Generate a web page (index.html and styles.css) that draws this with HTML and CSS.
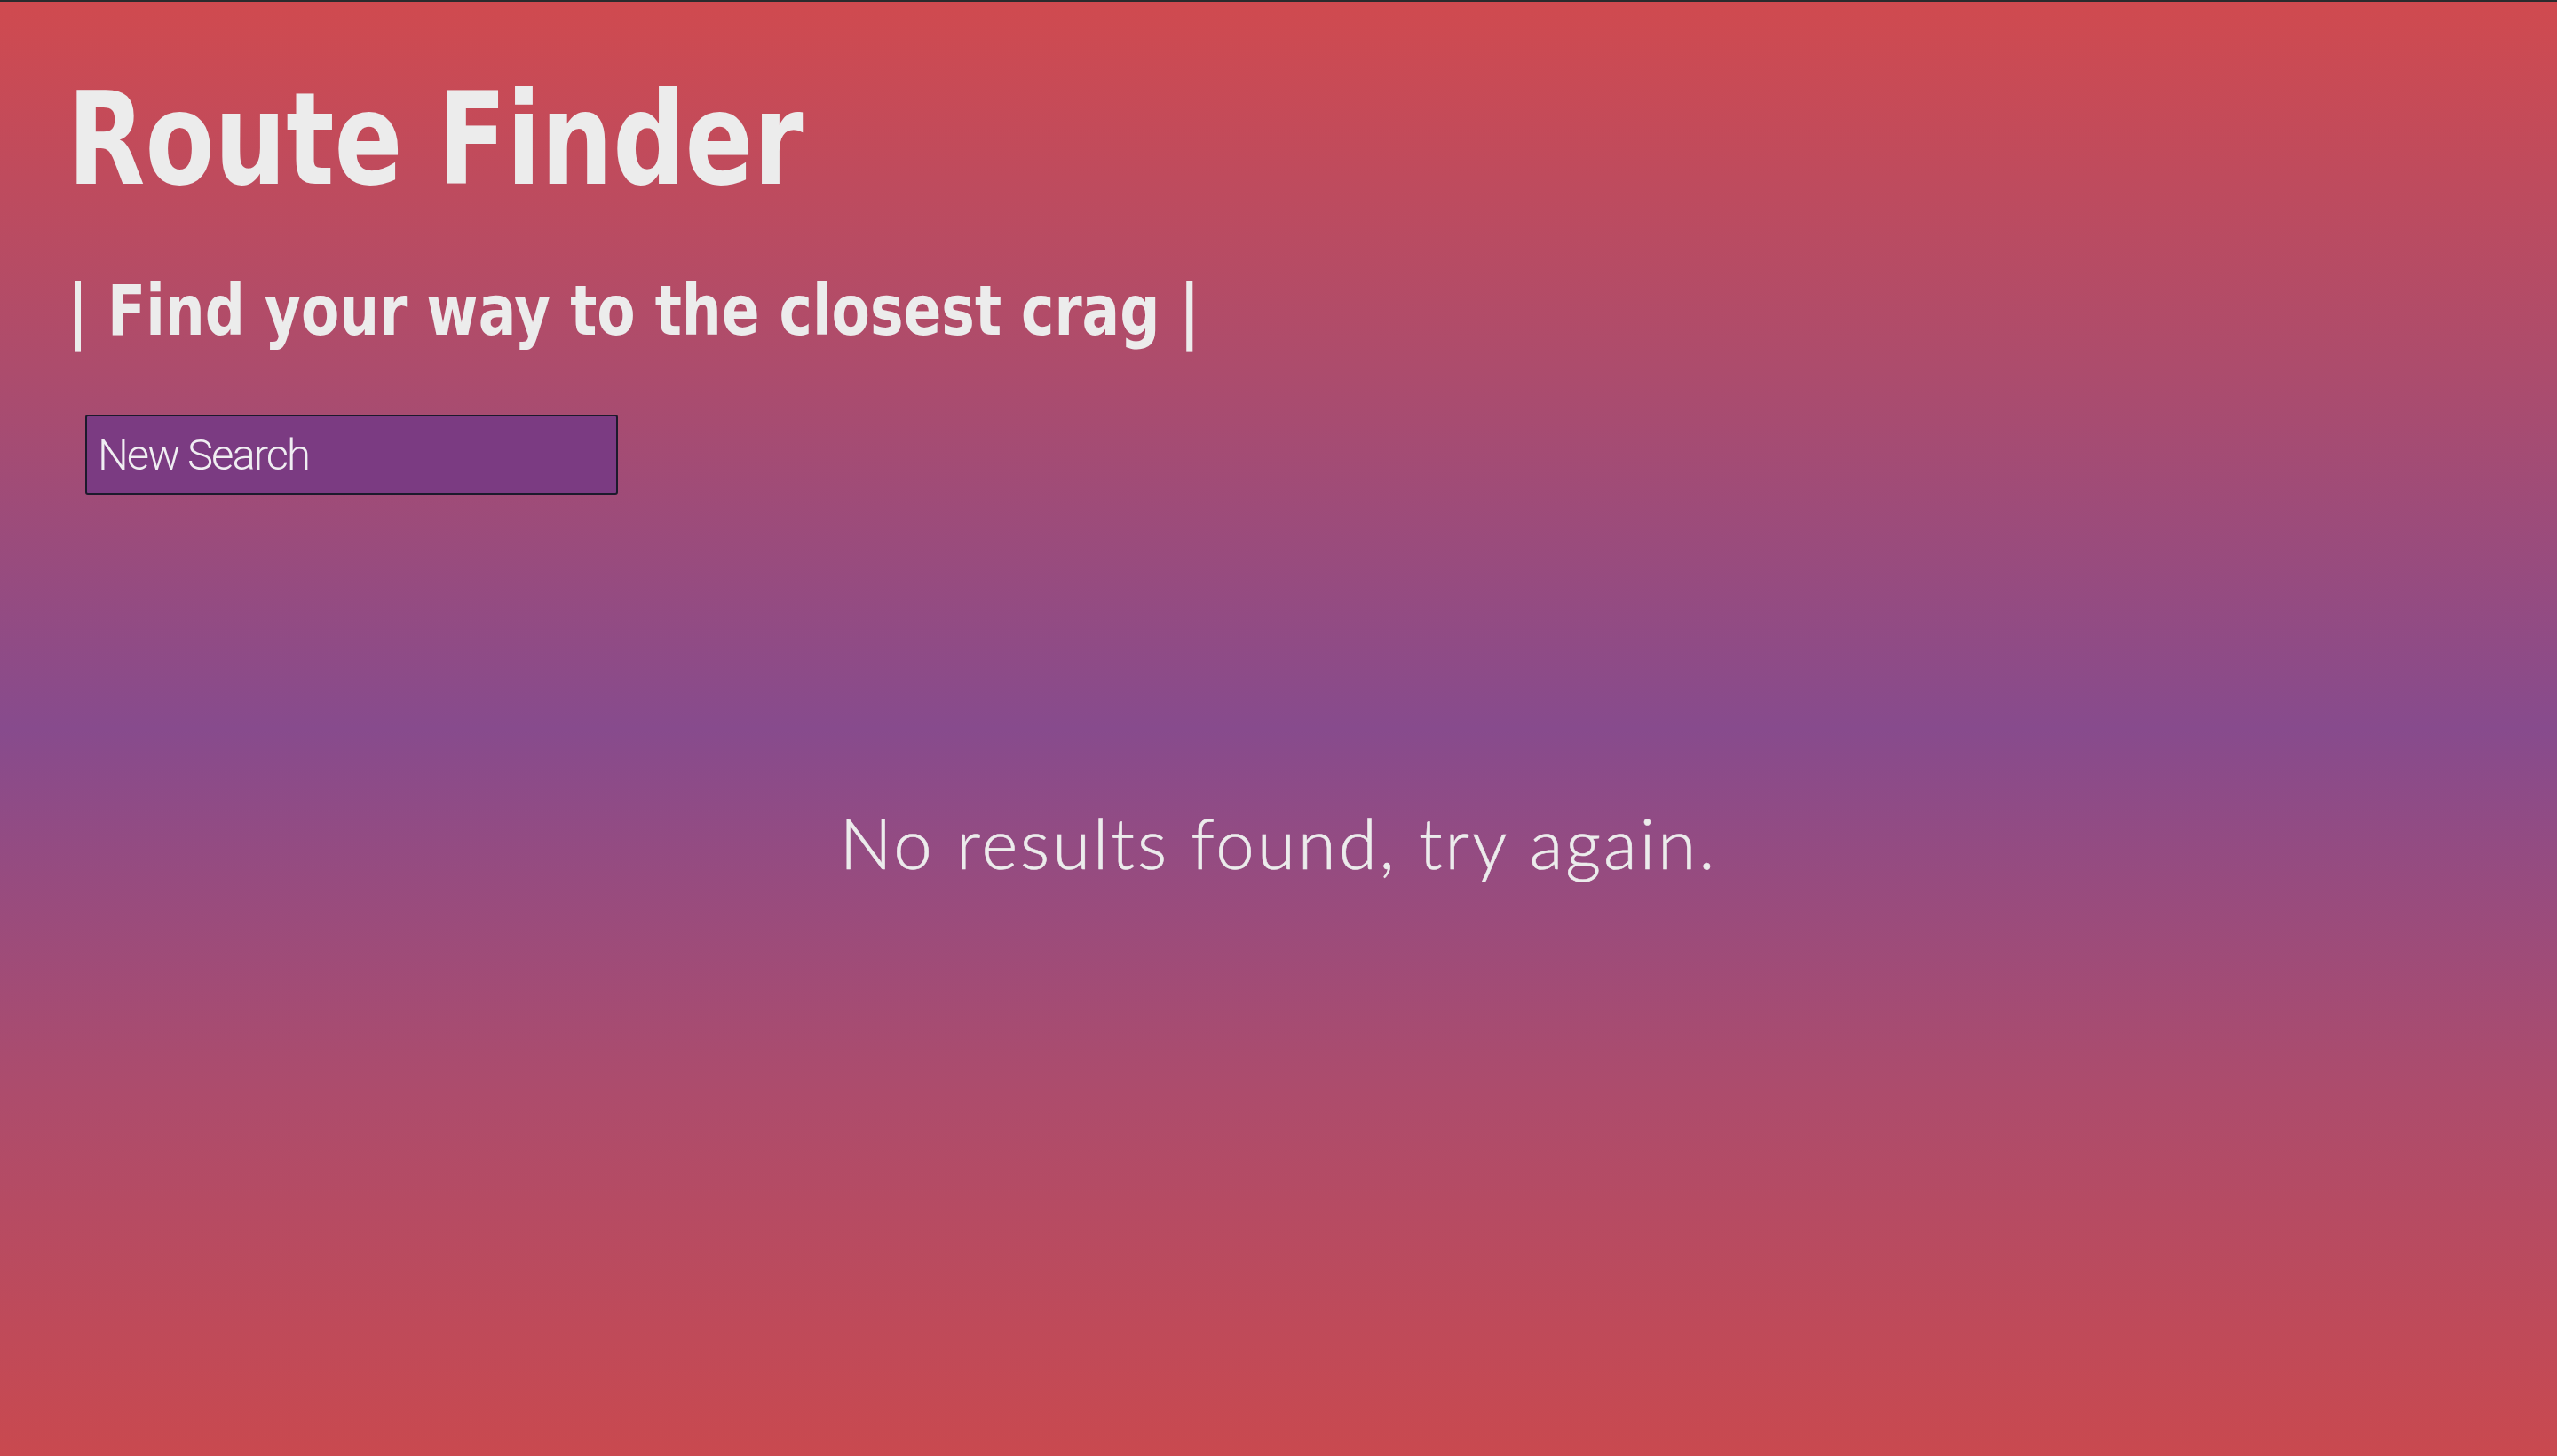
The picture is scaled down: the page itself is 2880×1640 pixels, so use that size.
FILE: index.html
```html
<!DOCTYPE html>
<html lang="en">
<head>
<meta charset="utf-8">
<title>Route Finder</title>
<link rel="stylesheet" href="styles.css">
</head>
<body>
<div class="page">
  <header class="header">
    <h1 class="title">Route Finder</h1>
    <h2 class="subtitle">| Find your way to the closest crag |</h2>
    <form class="search">
      <input class="search-input" type="text" placeholder="New Search">
    </form>
  </header>
  <main class="results">
    <p class="empty">No results found, try again.</p>
  </main>
</div>
</body>
</html>
```

FILE: styles.css
```css
html, body {
  margin: 0;
  padding: 0;
}

body {
  min-height: 1640px;
  box-sizing: border-box;
  border-top: 2px solid #2b2b2d;
  background: linear-gradient(to bottom, #d04a4f 0%, #ad4c6c 25%, #874b8d 50%, #ad4c6c 75%, #c9494f 100%);
  color: #ececec;
}

.page {
  display: flex;
  flex-direction: column;
}

.header {
  display: flex;
  flex-direction: column;
  align-items: flex-start;
  padding: 82px 0 0 76px;
}

.title {
  margin: 0;
  font-family: "DejaVu Sans Condensed", "DejaVu Sans", sans-serif;
  font-weight: 700;
  font-size: 145px;
  line-height: 1;
  letter-spacing: 0;
  transform: scaleX(0.87);
  transform-origin: left center;
}

.subtitle {
  margin: 82px 0 0 0;
  font-family: "DejaVu Sans Condensed", "DejaVu Sans", sans-serif;
  font-weight: 700;
  font-size: 79px;
  line-height: 1;
  letter-spacing: 0;
  transform: scaleX(0.888);
  transform-origin: left center;
}

.search {
  margin: 77px 0 0 20px;
}

.search-input {
  box-sizing: border-box;
  width: 600px;
  height: 90px;
  padding: 0 0 0 12px;
  border: 2px solid #1c1a2c;
  border-radius: 3px;
  background: #7b3b82;
  color: #f0f0f0;
  font-family: Roboto, sans-serif;
  font-weight: 300;
  font-size: 49px;
  letter-spacing: -2px;
  outline: none;
}

.search-input::placeholder {
  color: #f0eef2;
  opacity: 1;
}

.results {
  display: flex;
  justify-content: center;
}

.empty {
  margin: 353px 0 0 0;
  font-family: Lato, sans-serif;
  font-weight: 300;
  font-size: 78px;
  line-height: 1;
  letter-spacing: 3px;
  color: #ececec;
  -webkit-text-stroke: 0.6px #ececec;
}
```
